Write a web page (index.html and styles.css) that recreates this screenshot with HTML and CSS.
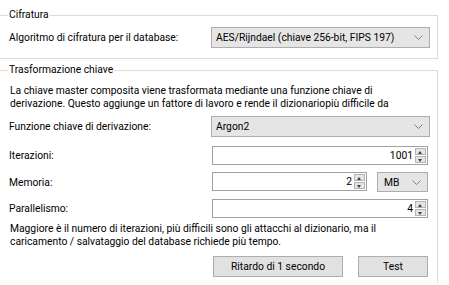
FILE: index.html
```html
<!DOCTYPE html>
<html lang="it">
<head>
    <meta charset="UTF-8">
    <title>Impostazioni database - Sicurezza</title>
    <link rel="stylesheet" href="styles.css">
</head>
<body>
    <fieldset class="group group-cipher">
        <legend>Cifratura</legend>
        <div class="row row-combo">
            <label>Algoritmo di cifratura per il database:</label>
            <div class="combo">
                <span>AES/Rijndael (chiave 256-bit, FIPS 197)</span>
                <svg class="chev" width="9" height="5" viewBox="0 0 9 5"><polyline points="0.5,0.5 4.5,4.5 8.5,0.5"/></svg>
            </div>
        </div>
    </fieldset>

    <fieldset class="group group-kdf">
        <legend>Trasformazione chiave</legend>
        <p class="note">La chiave master composita viene trasformata mediante una funzione chiave di<br>derivazione. Questo aggiunge un fattore di lavoro e rende il dizionariopiù difficile da</p>

        <div class="row row-combo">
            <label>Funzione chiave di derivazione:</label>
            <div class="combo">
                <span>Argon2</span>
                <svg class="chev" width="9" height="5" viewBox="0 0 9 5"><polyline points="0.5,0.5 4.5,4.5 8.5,0.5"/></svg>
            </div>
        </div>

        <div class="row row-num">
            <label>Iterazioni:</label>
            <div class="spin">
                <span class="val">1001</span>
                <div class="arrows"><i class="up"></i><i class="down"></i></div>
            </div>
        </div>

        <div class="row row-num">
            <label>Memoria:</label>
            <div class="pair">
                <div class="spin">
                    <span class="val">2</span>
                    <div class="arrows"><i class="up"></i><i class="down"></i></div>
                </div>
                <div class="combo combo-unit">
                    <span>MB</span>
                    <svg class="chev" width="9" height="5" viewBox="0 0 9 5"><polyline points="0.5,0.5 4.5,4.5 8.5,0.5"/></svg>
                </div>
            </div>
        </div>

        <div class="row row-num">
            <label>Parallelismo:</label>
            <div class="spin">
                <span class="val">4</span>
                <div class="arrows"><i class="up"></i><i class="down"></i></div>
            </div>
        </div>

        <p class="note note-bottom">Maggiore è il numero di iterazioni, più difficili sono gli attacchi al dizionario, ma il<br>caricamento / salvataggio del database richiede più tempo.</p>

        <div class="actions">
            <button class="btn btn-delay">Ritardo di 1 secondo</button>
            <button class="btn btn-test">Test</button>
        </div>
    </fieldset>
</body>
</html>
```

FILE: styles.css
```css
*{
    box-sizing: border-box;
}
body{
    margin: 0;
    width: 449px;
    height: 285px;
    overflow: hidden;
    background: #ffffff;
    color: #000000;
    font-family: Roboto, 'Liberation Sans', Arial, sans-serif;
    font-size: 10.3px;
}
.group{
    width: 438px;
    margin: 0;
    border: 1px solid #dcdcdc;
    border-left: none;
    padding: 4px 7px 10px 8px;
}
.group legend{
    padding: 0 1px;
    line-height: 16px;
}
.group-cipher{
    margin-top: 7px;
}
/* the lower group is cut off by the window edge */
.group-kdf{
    margin-top: 3px;
    padding-top: 6px;
    padding-bottom: 0;
    border-bottom: none;
    height: 221px;
}
.row{
    display: grid;
    grid-template-columns: 203px 1fr;
    align-items: center;
}
.row label{
    white-space: nowrap;
    padding-left: 1px;
}
.combo{
    height: 21px;
    display: flex;
    align-items: center;
    justify-content: space-between;
    background: #e5e5e5;
    border: 1px solid #adadad;
    padding: 0 6px 0 4px;
    white-space: nowrap;
}
.chev{
    fill: none;
    stroke: #808080;
    stroke-width: 1;
}
.note{
    margin: 0;
    line-height: 13px;
    white-space: nowrap;
    padding-left: 2px;
}
.group-kdf .row-combo{
    margin-top: 6px;
}
.row-num{
    margin-top: 7px;
}
.group-kdf .row-combo + .row-num{
    margin-top: 9px;
}
.spin{
    height: 19px;
    margin: 0 2px 0 1px;
    display: flex;
    align-items: center;
    justify-content: flex-end;
    border: 1px solid #a0a0a0;
    background: #ffffff;
    padding: 1px;
}
.spin .val{
    padding-right: 2px;
}
.arrows{
    width: 11px;
    height: 100%;
    display: flex;
    flex-direction: column;
    gap: 1px;
}
.arrows i{
    flex: 1;
    position: relative;
    background: #e5e5e5;
    border: 1px solid #b5b5b5;
}
.arrows i::after{
    content: "";
    position: absolute;
    left: 2px;
    border-left: 2.5px solid transparent;
    border-right: 2.5px solid transparent;
}
.arrows .up::after{
    top: 2px;
    border-bottom: 3px solid #404040;
}
.arrows .down::after{
    top: 2px;
    border-top: 3px solid #404040;
}
.pair{
    display: flex;
    gap: 10px;
}
.pair .spin{
    width: 155px;
    margin-right: 0;
}
.combo-unit{
    width: 51px;
    height: 20px;
    padding-left: 6px;
}
.note-bottom{
    margin-top: 4px;
}
.actions{
    display: flex;
    gap: 15px;
    margin-top: 8px;
    padding-left: 205px;
}
.btn{
    font: inherit;
    height: 21px;
    background: #e1e1e1;
    border: 1px solid #adadad;
    padding: 0;
    color: #000000;
}
.btn-delay{
    width: 130px;
}
.btn-test{
    width: 70px;
}
```
